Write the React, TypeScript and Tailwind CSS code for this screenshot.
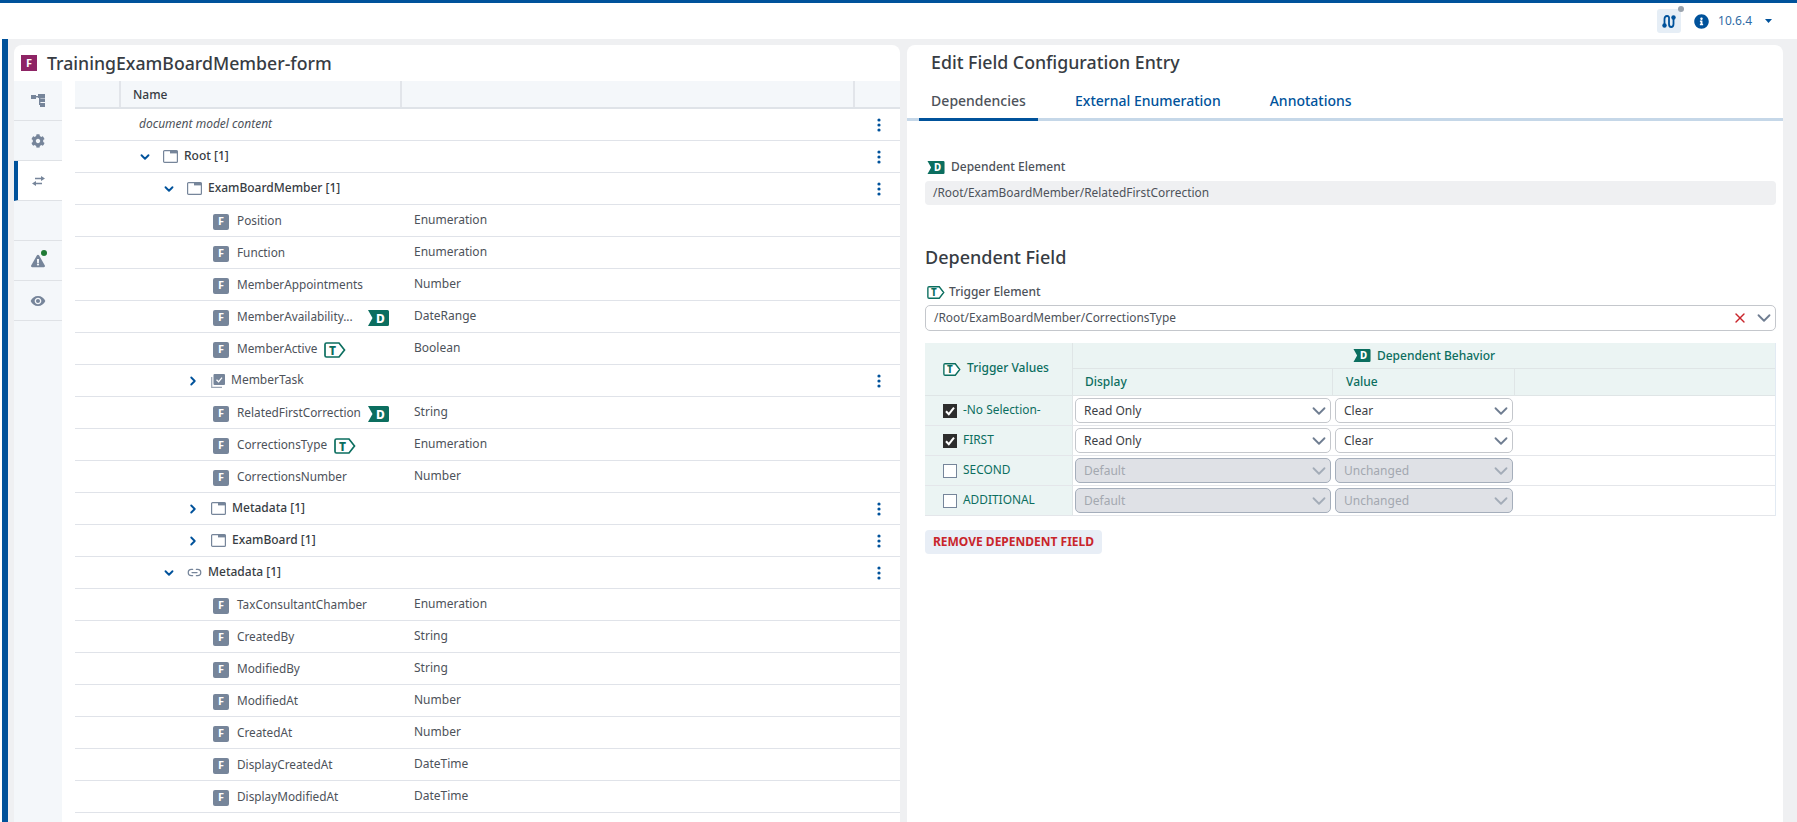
import { ChevronDown, ChevronRight, Link2, X } from "lucide-react";
import { FaCog, FaExclamationTriangle, FaInfoCircle } from "react-icons/fa";
import { MdVisibility } from "react-icons/md";

const font = { sans: "font-['Noto_Sans',sans-serif]" };

function DTag({ className = "" }: { className?: string }) {
  return (
    <svg width="21" height="16" viewBox="0 0 21 16" className={`shrink-0 ${className}`}>
      <path d="M0 0H19.5Q21 0 21 1.5V14.5Q21 16 19.5 16H0L4.5 8Z" fill="#0b6e5f" />
      <text x="12.5" y="12.5" textAnchor="middle" fontSize="12" fontWeight="800" fill="#fff" fontFamily="Noto Sans">D</text>
    </svg>
  );
}

function TTag({ className = "" }: { className?: string }) {
  return (
    <svg width="22" height="16" viewBox="0 0 22 16" className={`shrink-0 ${className}`}>
      <path d="M2.5 1H15L20.5 8L15 15H2.5Q1 15 1 13.5V2.5Q1 1 2.5 1Z" fill="#fff" stroke="#0b6e5f" strokeWidth="1.7" />
      <text x="8.5" y="12.5" textAnchor="middle" fontSize="12" fontWeight="800" fill="#0b6e5f" fontFamily="Noto Sans">T</text>
    </svg>
  );
}

function FBadge() {
  return (
    <span className="flex h-4 w-4 shrink-0 items-center justify-center rounded-[2px] bg-[#76859a] text-[11px] font-bold text-white">
      F
    </span>
  );
}

function FolderIcon() {
  return (
    <svg width="15" height="13" viewBox="0 0 15 13" className="shrink-0">
      <rect x="0.6" y="0.6" width="13.8" height="11.8" rx="1" fill="#fff" stroke="#76859a" strokeWidth="1.2" />
      <rect x="7" y="0.6" width="7.4" height="2.8" fill="#76859a" />
    </svg>
  );
}

function TaskIcon() {
  return (
    <svg width="14" height="14" viewBox="0 0 14 14" className="shrink-0">
      <path d="M0.7 3V13.3H11" fill="none" stroke="#9aa5b4" strokeWidth="1.2" />
      <rect x="2.5" y="0" width="11.5" height="11" rx="1" fill="#76859a" />
      <path d="M5.5 5.7L7.6 7.8L11 3.6" fill="none" stroke="#fff" strokeWidth="1.3" />
    </svg>
  );
}

function Kebab() {
  return (
    <svg width="4" height="14" viewBox="0 0 4 14" className="absolute right-[19px] top-[9px]">
      <circle cx="2" cy="2" r="1.6" fill="#00529b" />
      <circle cx="2" cy="7" r="1.6" fill="#00529b" />
      <circle cx="2" cy="12" r="1.6" fill="#00529b" />
    </svg>
  );
}

function Chevron({ open }: { open: boolean }) {
  return open ? (
    <ChevronDown size={14} strokeWidth={3.2} className="shrink-0 text-[#00529b]" />
  ) : (
    <ChevronRight size={14} strokeWidth={3.2} className="shrink-0 text-[#00529b]" />
  );
}

function BranchRow({ pad, open, icon, label, kebab = true, bold = true }: {
  pad: string;
  open: boolean;
  icon: React.ReactNode;
  label: string;
  kebab?: boolean;
  bold?: boolean;
}) {
  return (
    <div className={`relative flex h-8 items-center border-b-[1.5px] border-[#e0e3e9] ${pad}`}>
      <Chevron open={open} />
      <span className="ml-[11px] flex items-center gap-[6px]">
        {icon}
        <span className={bold ? "pb-[1px] text-[12px] font-medium text-[#373c43]" : "pb-[1px] text-[12px] text-[#4d525a]"}>{label}</span>
      </span>
      {kebab && <Kebab />}
    </div>
  );
}

function FieldRow({ name, type, tag }: { name: string; type: string; tag?: "D" | "T" }) {
  return (
    <div className="flex h-8 items-center border-b-[1.5px] border-[#e0e3e9]">
      <div className="flex w-[339px] shrink-0 items-center pl-[138px] pr-[25px] pt-[2px]">
        <FBadge />
        <span className="ml-2 pb-[1px] text-[11.8px] text-[#4d525a]">{name}</span>
        {tag === "D" && <DTag className="ml-auto" />}
        {tag === "T" && <TTag className="ml-[7px]" />}
      </div>
      <span className="pb-[1px] text-[12px] text-[#4d525a]">{type}</span>
    </div>
  );
}

function SideItem({ children, active = false }: { children?: React.ReactNode; active?: boolean }) {
  return (
    <div
      className={`flex h-10 items-center justify-center border-b-[1.5px] border-[#dfe2e6] ${
        active ? "border-l-4 border-l-[#00529b] bg-white pr-1" : ""
      }`}
    >
      {children}
    </div>
  );
}

function ValueSelect({ text, disabled = false, w }: { text: string; disabled?: boolean; w: string }) {
  return (
    <div
      className={`flex h-[25px] items-center justify-between rounded-[5px] border-[1.5px] pl-2 text-[12px] ${w} ${
        disabled ? "border-[#a5aebb] bg-[#dfe1e6] text-[#a3a8b0]" : "border-[#c4c7cc] bg-white text-[#3c4045]"
      }`}
    >
      <span>{text}</span>
      <ChevronDown size={22} strokeWidth={2} className={disabled ? "text-[#a3acb8]" : "text-[#6f7d91]"} />
    </div>
  );
}

function TriggerRow({ label, checked, display, value }: { label: string; checked: boolean; display: string; value: string }) {
  return (
    <div className="flex h-[30px] items-center border-b-[1.5px] border-[#e4e6ea]">
      <div className="flex h-full w-[148px] shrink-0 items-center gap-[6px] border-r-[1.5px] border-[#dfe5e6] bg-[#ebf4f3] pl-[18px]">
        {checked ? (
          <span className="flex h-[14px] w-[14px] items-center justify-center bg-[#2d2d2d]">
            <svg width="12" height="12" viewBox="0 0 12 12">
              <path d="M2 6.2L4.8 9.2L10 2.6" fill="none" stroke="#fff" strokeWidth="2" />
            </svg>
          </span>
        ) : (
          <span className="h-[14px] w-[14px] border-[1.5px] border-[#76859a] bg-white" />
        )}
        <span className="pb-[2px] text-[11.9px] text-[#0b6e5f]">{label}</span>
      </div>
      <div className="ml-[2px] flex gap-1">
        <ValueSelect text={display} w="w-[256px]" disabled={!checked} />
        <ValueSelect text={value} w="w-[178px]" disabled={!checked} />
      </div>
    </div>
  );
}

export default function App() {
  return (
    <div className={`flex h-[822px] w-[1797px] flex-col overflow-hidden bg-white ${font.sans}`}>
      <header className="flex h-[39px] shrink-0 items-center justify-end border-t-[3px] border-[#00529b] pr-[25px]">
        <div className="relative flex h-6 w-6 items-center justify-center rounded-[3px] bg-[#e6eef6]">
          <svg width="14" height="15" viewBox="0 0 14 15" fill="none" stroke="#00529b" strokeWidth="1.8">
            <path d="M2.5 12V5Q2.5 2 5 2T7 5V10Q7 13 9.2 13T11.5 10V3" />
            <circle cx="11.5" cy="3.5" r="2.2" fill="#00529b" stroke="none" />
            <circle cx="2.5" cy="11.5" r="2.2" fill="#00529b" stroke="none" />
          </svg>
          <span className="absolute right-[-3px] top-[-3px] h-[6px] w-[6px] rounded-full bg-[#9aa3ad]" />
        </div>
        <FaInfoCircle size={15} className="ml-[13px] text-[#00529b]" />
        <span className="ml-[9px] text-[12px] text-[#2f6ba5]">10.6.4</span>
        <svg width="7" height="4" viewBox="0 0 7 4" className="ml-[13px]">
          <path d="M0 0H7L3.5 4Z" fill="#00529b" />
        </svg>
      </header>

      <div className="flex min-h-0 flex-1">
        <div className="ml-[2px] w-[6px] shrink-0 bg-[#00529b]" />
        <main className="flex min-w-0 flex-1 gap-[7px] bg-[#eff0f2] pl-[6px] pr-[14px] pt-[6px]">
          {/* left panel: tree */}
          <section className="flex w-[886px] shrink-0 flex-col rounded-t-[8px] bg-white">
            <div className="flex h-9 shrink-0 items-center pl-[7px]">
              <span className="flex h-4 w-4 items-center justify-center bg-[#8e2465] text-[11px] font-bold text-white">F</span>
              <h1 className="ml-[10px] text-[17.7px] font-medium text-[#373c43]">TrainingExamBoardMember-form</h1>
            </div>
            <div className="flex min-h-0 flex-1">
              <nav className="w-12 shrink-0 bg-[#f4f7fa]">
                <SideItem>
                  <svg width="14" height="13" viewBox="0 0 14 13" fill="#76859a">
                    <rect x="0" y="1" width="5" height="4" />
                    <rect x="5" y="2" width="3" height="1.4" />
                    <rect x="7" y="0" width="7" height="4" />
                    <rect x="8" y="2" width="1.4" height="9" />
                    <rect x="9" y="4.5" width="5" height="3.5" />
                    <rect x="9" y="9" width="5" height="4" />
                  </svg>
                </SideItem>
                <SideItem>
                  <FaCog size={14} className="text-[#76859a]" />
                </SideItem>
                <SideItem active>
                  <svg width="13" height="10" viewBox="0 0 13 10" fill="#76859a">
                    <path d="M3 1.8H9V0L13 2.5L9 5V3.2H3Z" />
                    <path d="M10 6.8H4V5L0 7.5L4 10V8.2H10Z" />
                  </svg>
                </SideItem>
                <SideItem />
                <SideItem>
                  <span className="relative">
                    <FaExclamationTriangle size={14} className="text-[#76859a]" />
                    <span className="absolute right-[-2px] top-[-4px] h-[6px] w-[6px] rounded-full bg-[#1f7a35]" />
                  </span>
                </SideItem>
                <SideItem>
                  <MdVisibility size={16} className="text-[#76859a]" />
                </SideItem>
              </nav>

              <div className="ml-[13px] min-w-0 flex-1">
                <div className="flex h-[28px] items-center border-b-2 border-[#dfe3e8] bg-[#f4f7fa] text-[12px] font-medium text-[#373c43]">
                  <div className="h-full w-[46px] border-r-2 border-[#e2e5ea]" />
                  <div className="flex h-full w-[281px] items-center border-r-2 border-[#e2e5ea] pl-[12px] pt-[1px]">Name</div>
                  <div className="h-full w-[453px] border-r-2 border-[#e2e5ea]" />
                </div>
                <div className="relative flex h-8 items-center border-b-[1.5px] border-[#e0e3e9] pb-[2px] pl-[64px] text-[12px] italic text-[#4d525a]">
                  document model content
                  <Kebab />
                </div>
                <BranchRow pad="pl-[63px]" open icon={<FolderIcon />} label="Root [1]" />
                <BranchRow pad="pl-[87px]" open icon={<FolderIcon />} label="ExamBoardMember [1]" />
                <FieldRow name="Position" type="Enumeration" />
                <FieldRow name="Function" type="Enumeration" />
                <FieldRow name="MemberAppointments" type="Number" />
                <FieldRow name="MemberAvailability..." type="DateRange" tag="D" />
                <FieldRow name="MemberActive" type="Boolean" tag="T" />
                <BranchRow pad="pl-[111px]" open={false} icon={<TaskIcon />} label="MemberTask" bold={false} />
                <FieldRow name="RelatedFirstCorrection" type="String" tag="D" />
                <FieldRow name="CorrectionsType" type="Enumeration" tag="T" />
                <FieldRow name="CorrectionsNumber" type="Number" />
                <BranchRow pad="pl-[111px]" open={false} icon={<FolderIcon />} label="Metadata [1]" />
                <BranchRow pad="pl-[111px]" open={false} icon={<FolderIcon />} label="ExamBoard [1]" />
                <BranchRow pad="pl-[87px]" open icon={<Link2 size={15} className="shrink-0 text-[#76859a]" />} label="Metadata [1]" />
                <FieldRow name="TaxConsultantChamber" type="Enumeration" />
                <FieldRow name="CreatedBy" type="String" />
                <FieldRow name="ModifiedBy" type="String" />
                <FieldRow name="ModifiedAt" type="Number" />
                <FieldRow name="CreatedAt" type="Number" />
                <FieldRow name="DisplayCreatedAt" type="DateTime" />
                <FieldRow name="DisplayModifiedAt" type="DateTime" />
              </div>
            </div>
          </section>

          {/* right panel: edit form */}
          <section className="flex min-w-0 flex-1 flex-col rounded-t-[8px] bg-white">
            <h2 className="pl-[24px] pt-[1px] text-[17.75px] font-medium leading-[32px] text-[#373c43]">Edit Field Configuration Entry</h2>
            <div className="mt-[5px] flex h-[38px] border-b-[3px] border-[#c5d7e8]">
              <div className="ml-3 flex h-[38px] w-[119px] items-center justify-center border-b-[3px] border-[#00529b] text-[14px] font-medium text-[#4d525a]">
                Dependencies
              </div>
              <div className="ml-[37px] flex h-[35px] items-center text-[14px] font-medium text-[#00529b]">External Enumeration</div>
              <div className="ml-[49px] flex h-[35px] items-center text-[14px] font-medium text-[#00529b]">Annotations</div>
            </div>

            <div className="pl-[18px] pr-[7px]">
              <div className="mt-[37px] flex items-center">
                <DTag className="ml-[2px] h-[13px] w-[18px]" />
                <span className="ml-[6px] text-[12px] font-medium text-[#4d525a]">Dependent Element</span>
              </div>
              <div className="mt-[5px] flex h-6 items-center rounded-[4px] bg-[#eff0f2] pl-2 text-[11.9px] text-[#4d525a]">
                /Root/ExamBoardMember/RelatedFirstCorrection
              </div>

              <h3 className="mt-[38px] text-[18px] font-medium leading-[28px] text-[#373c43]">Dependent Field</h3>
              <div className="mt-[12px] flex items-center">
                <TTag className="ml-[2px] h-[13px] w-[18px]" />
                <span className="ml-[4px] text-[12px] font-medium text-[#4d525a]">Trigger Element</span>
              </div>
              <div className="mt-[4px] flex h-[26px] items-center justify-between rounded-[5px] border-[1.5px] border-[#c4c7cc] pl-2 text-[11.9px] text-[#4d525a]">
                <span>/Root/ExamBoardMember/CorrectionsType</span>
                <span className="flex items-center gap-[5px]">
                  <X size={16} strokeWidth={2} className="text-[#c9252b]" />
                  <ChevronDown size={22} strokeWidth={2} className="text-[#6f7d91]" />
                </span>
              </div>

              <div className="mt-[12px] border-r-[1.5px] border-[#e2eaf3]">
                <div className="flex h-[53px] border-b-[1.5px] border-[#dfe5e6] bg-[#ebf4f3] text-[12px] font-medium text-[#0b6e5f]">
                  <div className="flex w-[148px] shrink-0 items-center gap-[6px] border-r-[1.5px] border-[#dfe5e6] pl-[18px]">
                    <TTag className="h-[13px] w-[18px]" />
                    <span className="pb-[2px]">Trigger Values</span>
                  </div>
                  <div className="flex flex-1 flex-col">
                    <div className="flex h-[26px] items-center justify-center gap-[6px] border-b-[1.5px] border-[#dfe5e6]">
                      <DTag className="h-[13px] w-[18px]" />
                      Dependent Behavior
                    </div>
                    <div className="flex flex-1">
                      <div className="flex w-[260px] items-center border-r-[1.5px] border-[#dfe5e6] pb-[1px] pl-[12px]">Display</div>
                      <div className="flex w-[182px] items-center border-r-[1.5px] border-[#dfe5e6] pb-[1px] pl-[13px]">Value</div>
                    </div>
                  </div>
                </div>
                <TriggerRow label="-No Selection-" checked display="Read Only" value="Clear" />
                <TriggerRow label="FIRST" checked display="Read Only" value="Clear" />
                <TriggerRow label="SECOND" checked={false} display="Default" value="Unchanged" />
                <TriggerRow label="ADDITIONAL" checked={false} display="Default" value="Unchanged" />
              </div>

              <button className="mt-[14px] flex h-6 w-[177px] items-center justify-center rounded-[4px] bg-[#e8eef6] text-[12px] font-bold uppercase text-[#c9252b]">
                Remove Dependent Field
              </button>
            </div>
          </section>
        </main>
      </div>
    </div>
  );
}
